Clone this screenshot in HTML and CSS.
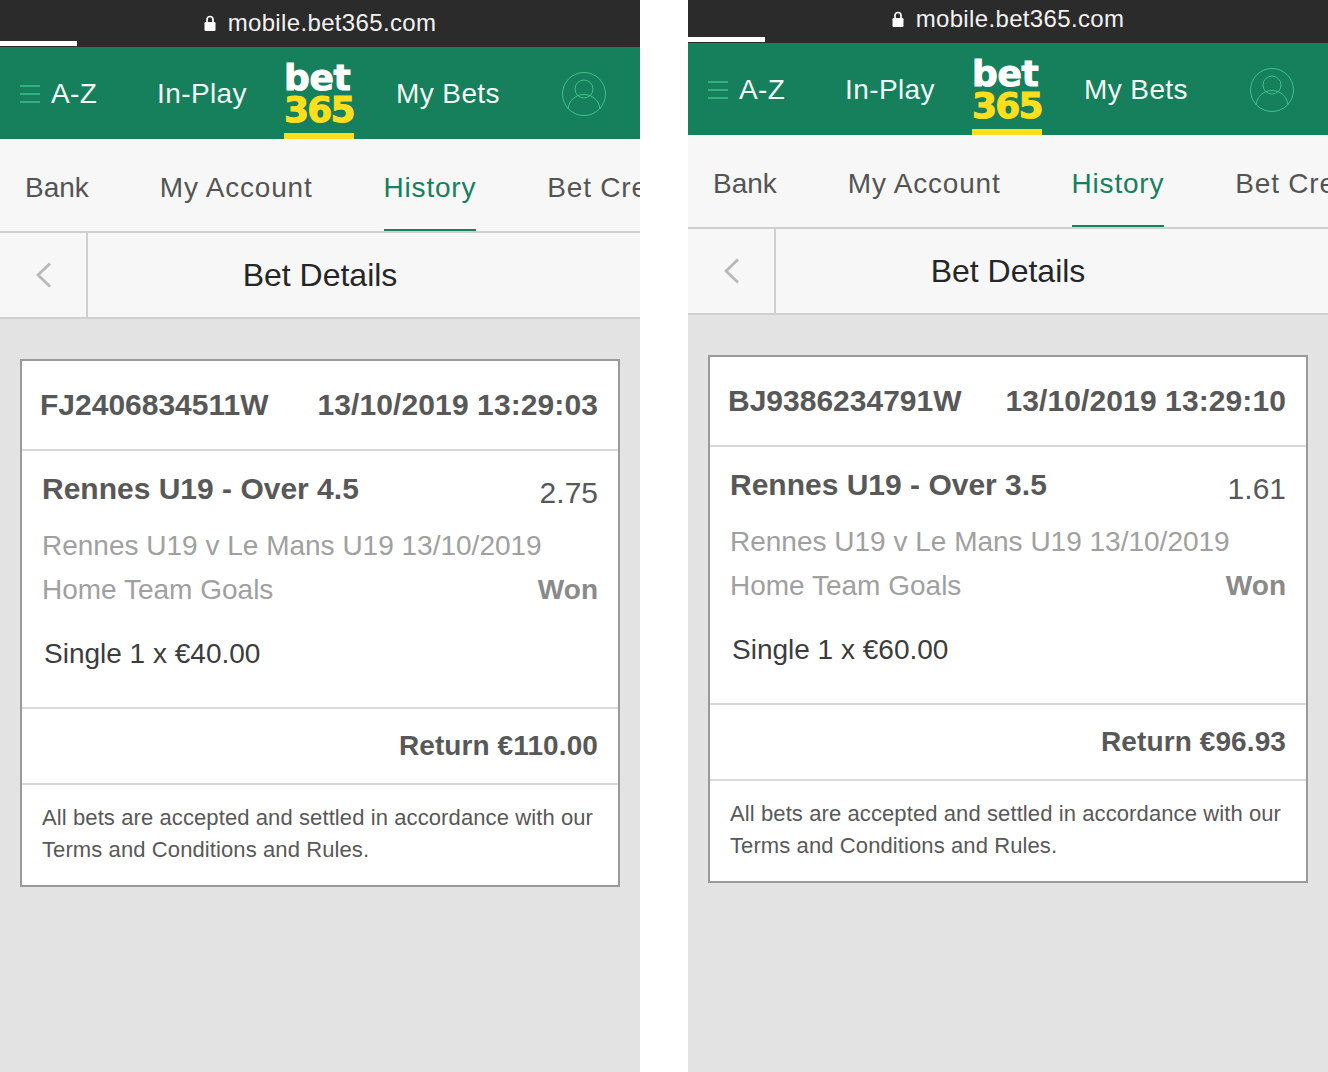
FILE: index.html
```html
<!DOCTYPE html>
<html>
<head>
    <title>Bet Details</title>
    <link rel="stylesheet" href="styles.css">
</head>
<body>
    <div class="screens">
        <div class="screen">
            <div class="url-bar">
                <span class="url"><svg class="lock" viewBox="0 0 12 16"><path d="M3 8V4.500a3 3 0 0 1 6 0V8" fill="none" stroke="#fff" stroke-width="1.700"/><rect x="0.500" y="7" width="11" height="9" rx="1.200" fill="#fff"/></svg>mobile.bet365.com</span>
                <div class="progress"></div>
            </div>
            <div class="top-nav">
                <svg class="burger" viewBox="0 0 20 18"><path d="M0 1h20M0 9h20M0 17h20" stroke="#3fc28f" stroke-width="1.400"/></svg>
                <span class="nav-az">A-Z</span>
                <span class="nav-play">In-Play</span>
                <div class="logo"><span class="logo-bet">bet</span><span class="logo-365">365</span></div>
                <span class="nav-bets">My Bets</span>
                <svg class="avatar" viewBox="0 0 44 44" fill="none" stroke="#3fc28f" stroke-width="1"><circle cx="22" cy="22" r="21.500"/><circle cx="22" cy="17" r="9"/><path d="M6 37c1-9 8-14.500 16-14.500S37 28 38 37"/></svg>
            </div>
            <div class="sub-nav">
                <span class="tab tab-bank">Bank</span>
                <span class="tab">My Account</span>
                <span class="tab tab-history">History</span>
                <span class="tab">Bet Credits</span>
            </div>
            <div class="title-row">
                <div class="back"><svg viewBox="0 0 15 26"><path d="M14 1.500 2 13l12 11.500" fill="none" stroke="#b8b8b8" stroke-width="2.800"/></svg></div>
                <h1>Bet Details</h1>
            </div>
            <div class="content">
                <div class="card">
                    <div class="card-head"><span>FJ2406834511W</span><span class="placed">13/10/2019 13:29:03</span></div>
                    <div class="card-body">
                        <div class="line-a"><span class="selection">Rennes U19 - Over 4.5</span><span class="odds">2.75</span></div>
                        <div class="line-b">Rennes U19 v Le Mans U19 13/10/2019</div>
                        <div class="line-c"><span>Home Team Goals</span><span class="won">Won</span></div>
                        <div class="stake">Single 1 x €40.00</div>
                    </div>
                    <div class="card-return">Return €110.00</div>
                    <div class="card-terms">All bets are accepted and settled in accordance with our Terms and Conditions and Rules.</div>
                </div>
            </div>
        </div>

        <div class="screen screen-shifted">
            <div class="url-bar">
                <span class="url"><svg class="lock" viewBox="0 0 12 16"><path d="M3 8V4.500a3 3 0 0 1 6 0V8" fill="none" stroke="#fff" stroke-width="1.700"/><rect x="0.500" y="7" width="11" height="9" rx="1.200" fill="#fff"/></svg>mobile.bet365.com</span>
                <div class="progress"></div>
            </div>
            <div class="top-nav">
                <svg class="burger" viewBox="0 0 20 18"><path d="M0 1h20M0 9h20M0 17h20" stroke="#3fc28f" stroke-width="1.400"/></svg>
                <span class="nav-az">A-Z</span>
                <span class="nav-play">In-Play</span>
                <div class="logo"><span class="logo-bet">bet</span><span class="logo-365">365</span></div>
                <span class="nav-bets">My Bets</span>
                <svg class="avatar" viewBox="0 0 44 44" fill="none" stroke="#3fc28f" stroke-width="1"><circle cx="22" cy="22" r="21.500"/><circle cx="22" cy="17" r="9"/><path d="M6 37c1-9 8-14.500 16-14.500S37 28 38 37"/></svg>
            </div>
            <div class="sub-nav">
                <span class="tab tab-bank">Bank</span>
                <span class="tab">My Account</span>
                <span class="tab tab-history">History</span>
                <span class="tab">Bet Credits</span>
            </div>
            <div class="title-row">
                <div class="back"><svg viewBox="0 0 15 26"><path d="M14 1.500 2 13l12 11.500" fill="none" stroke="#b8b8b8" stroke-width="2.800"/></svg></div>
                <h1>Bet Details</h1>
            </div>
            <div class="content">
                <div class="card">
                    <div class="card-head"><span>BJ9386234791W</span><span class="placed">13/10/2019 13:29:10</span></div>
                    <div class="card-body">
                        <div class="line-a"><span class="selection">Rennes U19 - Over 3.5</span><span class="odds">1.61</span></div>
                        <div class="line-b">Rennes U19 v Le Mans U19 13/10/2019</div>
                        <div class="line-c"><span>Home Team Goals</span><span class="won">Won</span></div>
                        <div class="stake">Single 1 x €60.00</div>
                    </div>
                    <div class="card-return">Return €96.93</div>
                    <div class="card-terms">All bets are accepted and settled in accordance with our Terms and Conditions and Rules.</div>
                </div>
            </div>
        </div>
    </div>
</body>
</html>
```

FILE: styles.css
```css
body {
    margin: 0;
    background-color: #fff;
    font-family: "Liberation Sans", Arial, sans-serif;
    overflow: hidden;
}
.screens {
    display: flex;
    gap: 48px;
    height: 1072px;
}
.screen {
    width: 640px;
    height: 1072px;
    display: flex;
    flex-direction: column;
    overflow: hidden;
    background-color: #e3e3e3;
}
.url-bar {
    height: 47px;
    flex: none;
    background-color: #2b2b2b;
    position: relative;
    display: flex;
    justify-content: center;
    color: #f2f2f2;
    font-size: 24px;
    letter-spacing: 0.35px;
}
.screen-shifted .url-bar {
    height: 43px;
}
.url {
    display: flex;
    align-items: center;
    height: 45px;
}
.screen-shifted .url {
    height: 37px;
}
.lock {
    width: 12px;
    height: 16px;
    margin-right: 12px;
}
.progress {
    position: absolute;
    left: 0;
    bottom: 1px;
    width: 77px;
    height: 5px;
    background-color: #fff;
}
.top-nav {
    height: 92px;
    flex: none;
    box-sizing: border-box;
    padding-top: 2px;
    background-color: #167f5c;
    color: #f1f8f5;
    display: flex;
    align-items: center;
    font-size: 28px;
    letter-spacing: 0.4px;
    white-space: nowrap;
}
.burger {
    width: 20px;
    height: 18px;
    margin-left: 20px;
    margin-right: 11px;
}
.nav-az {
    width: 106px;
}
.nav-play {
    width: 127px;
}
.logo {
    width: 70px;
    height: 92px;
    margin-top: -2px;
    margin-right: 42px;
    box-sizing: border-box;
    border-bottom: 6px solid #ffdf1b;
    display: flex;
    flex-direction: column;
    font-family: "DejaVu Sans", sans-serif;
    font-weight: bold;
    font-size: 36px;
    line-height: 32px;
    padding-top: 15px;
    -webkit-text-stroke: 1px currentColor;
}
.logo-bet {
    color: #fff;
    letter-spacing: -0.3px;
}
.logo-365 {
    color: #ffdf1b;
    letter-spacing: -1.8px;
}
.nav-bets {
    width: 166px;
}
.avatar {
    width: 44px;
    height: 44px;
}
.sub-nav {
    height: 92px;
    flex: none;
    background-color: #f7f7f7;
    border-bottom: 2px solid #cfcfcf;
    display: flex;
    padding-left: 25px;
    gap: 71px;
    font-size: 28px;
    letter-spacing: 0.8px;
    line-height: 98px;
    color: #545454;
    white-space: nowrap;
}
.tab-bank {
    letter-spacing: 0;
}
.tab-history {
    color: #167f5c;
    border-bottom: 2px solid #167f5c;
}
.title-row {
    height: 84px;
    flex: none;
    background-color: #f7f7f7;
    border-bottom: 2px solid #cfcfcf;
    display: flex;
    align-items: stretch;
}
.back {
    width: 86px;
    border-right: 2px solid #cfcfcf;
    display: flex;
    align-items: center;
    justify-content: center;
}
.back svg {
    width: 15px;
    height: 26px;
}
h1 {
    margin: 0 88px 0 0;
    flex: 1;
    text-align: center;
    font-size: 32px;
    font-weight: normal;
    line-height: 84px;
    color: #262626;
}
.content {
    padding: 40px 20px 0;
}
.card {
    background-color: #fff;
    border: 2px solid #9a9a9a;
    color: #585858;
}
.card-head {
    height: 90px;
    box-sizing: border-box;
    padding: 0 20px 0 18px;
    border-bottom: 2px solid #d8d8d8;
    display: flex;
    justify-content: space-between;
    align-items: center;
    font-size: 30px;
    font-weight: bold;
}
.placed {
    letter-spacing: 0.1px;
}
.card-body {
    height: 258px;
    box-sizing: border-box;
    padding: 0 20px;
    border-bottom: 2px solid #d8d8d8;
}
.line-a {
    display: flex;
    justify-content: space-between;
    padding-top: 18px;
    line-height: 40px;
}
.selection {
    font-size: 30px;
    font-weight: bold;
}
.odds {
    font-size: 30px;
    padding-top: 4px;
}
.line-b {
    margin-top: 13px;
    font-size: 28px;
    line-height: 40px;
    color: #a0a0a0;
}
.line-c {
    display: flex;
    justify-content: space-between;
    margin-top: 4px;
    font-size: 28px;
    line-height: 40px;
    color: #a0a0a0;
}
.won {
    font-weight: bold;
    color: #8a8a8a;
}
.stake {
    margin: 24px 0 0 2px;
    font-size: 28px;
    line-height: 40px;
    color: #3c3c3c;
}
.card-return {
    height: 76px;
    box-sizing: border-box;
    padding: 0 20px;
    border-bottom: 2px solid #d8d8d8;
    text-align: right;
    font-size: 28px;
    letter-spacing: 0.1px;
    font-weight: bold;
    line-height: 74px;
}
.card-terms {
    height: 100px;
    box-sizing: border-box;
    padding: 17px 20px 0;
    font-size: 22px;
    letter-spacing: 0.1px;
    line-height: 32px;
}
```
